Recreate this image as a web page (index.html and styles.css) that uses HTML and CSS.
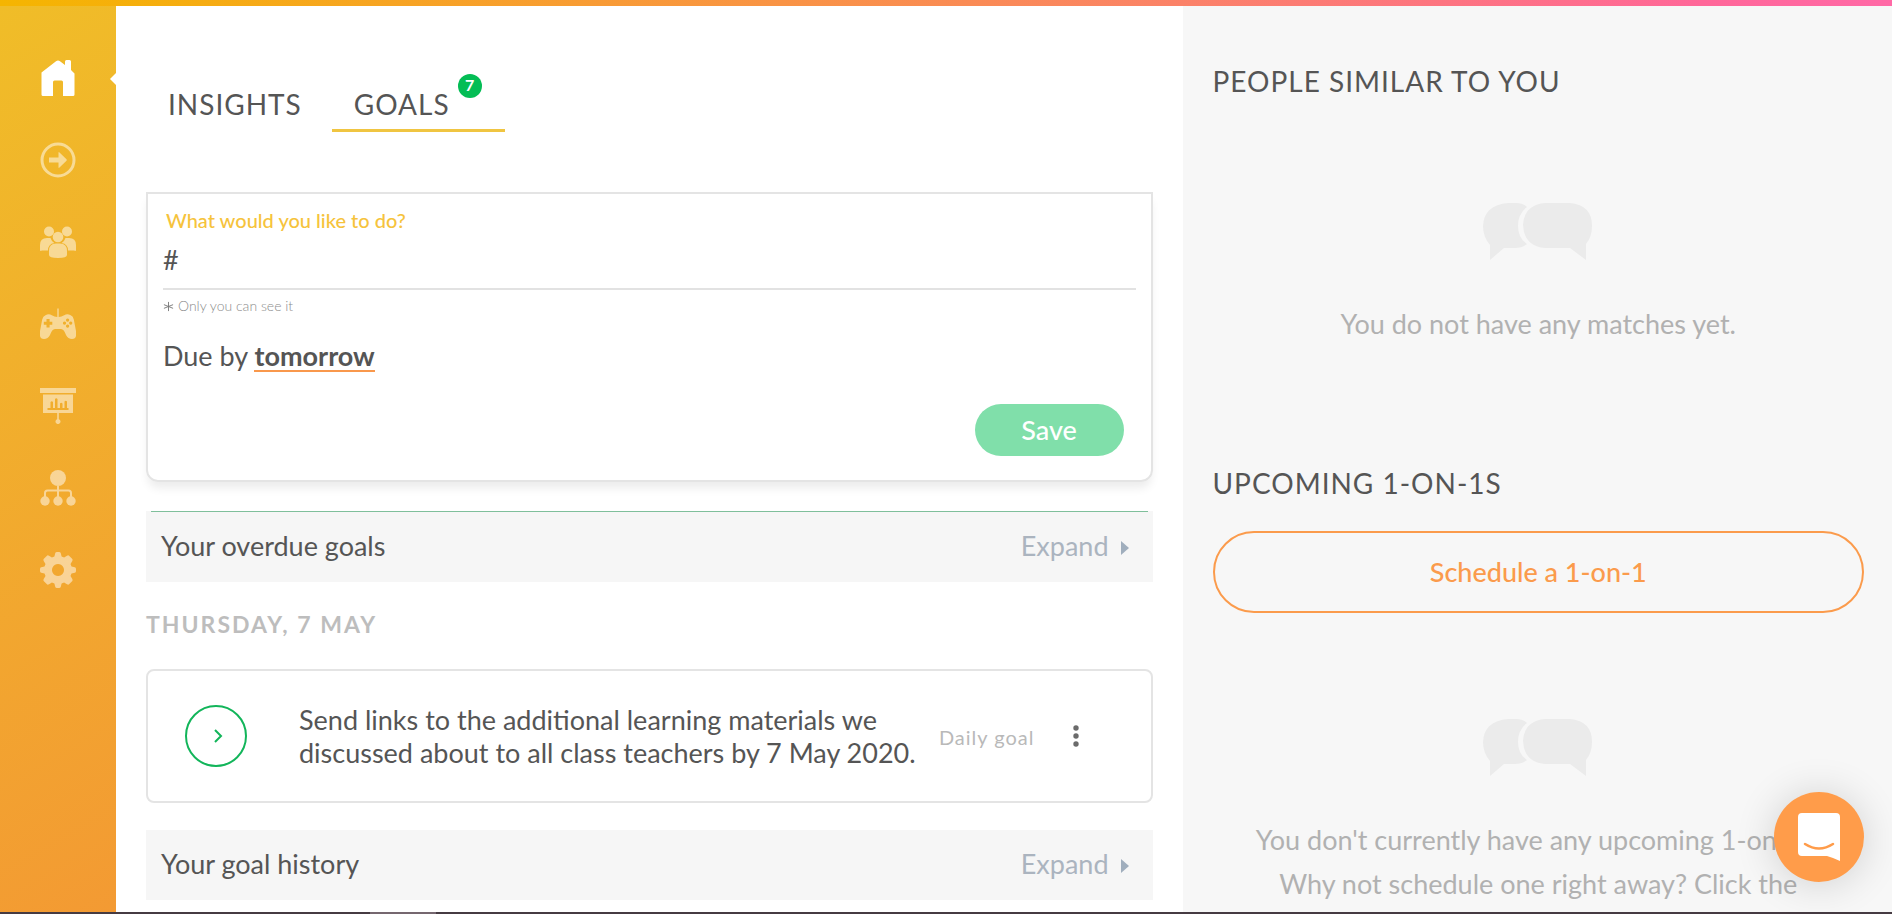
FILE: index.html
```html
<!DOCTYPE html>
<html lang="en">

<head>
    <meta charset="UTF-8">
    <meta name="viewport" content="width=device-width, initial-scale=1.0">
    <title>Goals</title>
    <link rel="stylesheet" href="styles.css">
</head>
<body>
<div class="topbar"></div>

<div class="layout">
    <nav class="sidebar" aria-label="Main">
        <a href="#home" class="active" aria-label="Home">
            <svg viewBox="0 0 36 36"><path d="M1.500 12.500L16 1.200q2-1.500 4 0L25 5V1.500Q25 0 26.500 0h3Q31 0 31 1.500V10l3.500 3.500V34.500Q34.500 36 33 36H23V22q0-1.500-1.500-1.500h-7Q13 20.500 13 22V36H3q-1.500 0-1.500-1.500z"/></svg>
        </a>
        <a href="#next" aria-label="Next steps">
            <svg viewBox="0 0 36 36"><circle cx="18" cy="18" r="16" fill="none" stroke="currentColor" stroke-width="3"/><path d="M9 15.500h9.500V11q0-1.500 1-.5l7 6.800q.7.700 0 1.400l-7 6.800q-1 1-1-.5v-4.500H9z"/></svg>
        </a>
        <a href="#people" aria-label="People">
            <svg viewBox="0 0 36 36"><circle cx="9" cy="7.500" r="5"/><circle cx="27" cy="7.500" r="5"/><circle cx="18" cy="13" r="5.300"/><path d="M0 26v-5q0-7 7-7h3.500q1 3.300 3.800 5Q8 20 8 26.500H2Q0 27.500 0 26zM36 26v-5q0-7-7-7h-3.500q-1 3.300-3.800 5Q28 20 28 26.500h6q2 1 2-.5zM9 31v-4q0-7.500 7-7.500h4q7 0 7 7.500v4q0 3-9 3t-9-3z"/></svg>
        </a>
        <a href="#games" aria-label="Games">
            <svg viewBox="0 0 36 36"><path fill-rule="evenodd" d="M17.300 2.500h1.400V11q2.800 0 5.500-1.700 3-2 6.500 0 2.500 1 3.100 4.200L36 25v5q-.5 3-4 3-4 0-6-4-2-6-5-6h-6q-3 0-5 6-2 4-6 4-3.500 0-4-3v-5l2.200-11.500Q3 10.300 5.500 9.300q3.200-2 6.300 0Q14.500 11 17.300 11zM6.500 13v2.700H3.800v3.100h2.700v2.700h3.100v-2.700h2.700v-3.100H9.600V13zM27.600 12.500a1.600 1.600 0 1 0 .01 0zM27.600 18.500a1.600 1.600 0 1 0 .01 0zM24.500 15.500a1.600 1.600 0 1 0 .01 0zM30.700 15.500a1.600 1.600 0 1 0 .01 0z"/></svg>
        </a>
        <a href="#reports" aria-label="Reports">
            <svg viewBox="0 0 36 36"><path fill-rule="evenodd" d="M0 0h36v5H0zM3 6.500h30V25H18.800v6.200a2.500 2.500 0 1 1-1.600 0V25H3zM7.500 20v2h21v-2H27v-6.500q-1.200-1.500-2.500 0V20h-2v-4.500q-1.300-1.500-2.500 0V20h-2.500v-9q-1.200-1.500-2.500 0v9h-2v-6q-1.200-1.500-2.500 0v6z"/></svg>
        </a>
        <a href="#teams" aria-label="Teams">
            <svg viewBox="0 0 36 36"><circle cx="18" cy="8" r="8"/><circle cx="5" cy="31" r="4.700"/><circle cx="18" cy="31" r="4.700"/><circle cx="31" cy="31" r="4.700"/><path fill="none" stroke="currentColor" stroke-width="2" d="M18 16v10.500M5 26.500V23q0-2.500 2.500-2.500H17M19 20.500h9.500Q31 20.500 31 23v3.500"/></svg>
        </a>
        <a href="#settings" aria-label="Settings">
            <svg viewBox="0 0 36 36"><path fill-rule="evenodd" d="M15.200 1.200Q15.500 0 17 0h2q1.500 0 1.800 1.200l.8 3.300 2.500 1 2.900-1.800q1.300-.8 2.300.2l2.800 2.800q1 1 .2 2.300l-1.800 2.900 1 2.500 3.300.8Q36 15.500 36 17v2q0 1.500-1.200 1.800l-3.300.8-1 2.500 1.800 2.900q.8 1.300-.2 2.300l-2.800 2.800q-1 1-2.300.2l-2.900-1.800-2.500 1-.8 3.300Q20.500 36 19 36h-2q-1.500 0-1.800-1.200l-.8-3.300-2.500-1L9 32.300q-1.300.8-2.300-.2l-2.800-2.800q-1-1-.2-2.300l1.800-2.900-1-2.500-3.300-.8Q0 20.500 0 19v-2q0-1.500 1.200-1.800l3.300-.8 1-2.500L3.700 9q-.8-1.300.2-2.300l2.800-2.800q1-1 2.300-.2l2.900 1.800 2.500-1zM18 12a6 6 0 1 0 .01 0z"/></svg>
        </a>
    </nav>

    <main class="main">
        <div class="tabs">
            <a href="#insights" class="tab">INSIGHTS</a>
            <a href="#goals" class="tab selected">GOALS<span class="badge">7</span></a>
        </div>

        <form class="goal-form">
            <label for="goal">What would you like to do?</label>
            <input type="text" id="goal" name="goal" value="#">
            <p class="hint">
                <svg viewBox="0 0 12 12"><path d="M6 1v10M1 4l10 4M11 4L1 8"/></svg>
                Only you can see it
            </p>
            <p class="due">Due by <a href="#due">tomorrow</a></p>
            <button type="submit" class="save">Save</button>
        </form>

        <section class="bar bar-overdue">
            <h2>Your overdue goals</h2>
            <button type="button" class="expand">Expand <span class="caret"></span></button>
        </section>

        <h3 class="date">THURSDAY, 7 MAY</h3>

        <article class="goal">
            <button type="button" class="check" aria-label="Mark as done">
                <svg viewBox="0 0 8 14"><path d="M1 1l6 6-6 6"/></svg>
            </button>
            <p class="goal-text">Send links to the additional learning materials we discussed about to all class teachers by 7 May 2020.</p>
            <span class="goal-type">Daily goal</span>
            <button type="button" class="more" aria-label="More">
                <svg viewBox="0 0 6 24"><circle cx="3" cy="4" r="2.700"/><circle cx="3" cy="12" r="2.700"/><circle cx="3" cy="20" r="2.700"/></svg>
            </button>
        </article>

        <section class="bar">
            <h2>Your goal history</h2>
            <button type="button" class="expand">Expand <span class="caret"></span></button>
        </section>
    </main>

    <aside class="side">
        <section class="matches">
            <h2>PEOPLE SIMILAR TO YOU</h2>
            <div class="empty">
                <svg viewBox="0 0 110 57"><path d="M25 0h8q7 0 11 4-9 7-9 19t9 18q-5 4-12 4H21L7 57V42Q0 34 0 23 1 2 25 0zM62 0h25q22 2 22 23 0 11-6 18v16L87 45H62Q41 43 40 22 41 2 62 0z"/></svg>
                <p>You do not have any matches yet.</p>
            </div>
        </section>

        <section>
            <h2>UPCOMING 1-ON-1S</h2>
            <button type="button" class="schedule">Schedule a 1-on-1</button>
            <div class="empty">
                <svg viewBox="0 0 110 57"><path d="M25 0h8q7 0 11 4-9 7-9 19t9 18q-5 4-12 4H21L7 57V42Q0 34 0 23 1 2 25 0zM62 0h25q22 2 22 23 0 11-6 18v16L87 45H62Q41 43 40 22 41 2 62 0z"/></svg>
                <p>You don't currently have any upcoming 1-on-1s.<br>Why not schedule one right away? Click the</p>
            </div>
        </section>
    </aside>
</div>

<div class="bottombar"></div>

<button type="button" class="chat" aria-label="Open chat">
    <svg viewBox="0 0 42 48"><path fill="#fff" d="M4 0h34q4 0 4 4v44q-6-3-13-5H4q-4 0-4-4V4q0-4 4-4z"/><path fill="none" stroke="#ff9c4a" stroke-width="2.500" stroke-linecap="round" d="M7 31q14 9 28 0"/></svg>
</button>
</body>
</html>
```
FILE: styles.css
```css
* {
    box-sizing: border-box;
}

body {
    margin: 0;
    height: 100vh;
    display: flex;
    flex-direction: column;
    overflow: hidden;
    font-family: Lato, sans-serif;
    font-size: 27px;
    line-height: 32px;
    color: #555;
    background: #fff;
}

h2, h3, p {
    margin: 0;
    font-size: inherit;
    font-weight: 400;
}

a {
    color: inherit;
    text-decoration: none;
}

button, input {
    font: inherit;
    border: none;
    background: none;
    padding: 0;
}

button {
    cursor: pointer;
}

svg {
    display: block;
    fill: currentColor;
}

.topbar {
    flex: none;
    height: 6px;
    background: linear-gradient(90deg, #f5b500, #fb8267 62%, #ff6799 90%, #ff69a6);
}

.bottombar {
    flex: none;
    height: 2px;
    background: linear-gradient(90deg, #463b42 370px, #75676f 370px, #75676f 436px, #463b42 436px);
}

.layout {
    flex: 1;
    min-height: 0;
    display: grid;
    grid-template-columns: 116px 1fr 37.5%;
    overflow: hidden;
}

/* Sidebar */
.sidebar {
    position: relative;
    display: flex;
    flex-direction: column;
    align-items: center;
    gap: 46px;
    padding-top: 54px;
    color: rgba(255, 255, 255, 0.5);
    background: linear-gradient(150deg, #f0bd28, #f39a33);
}

.sidebar::after {
    content: "";
    position: absolute;
    top: 67px;
    right: 0;
    border: 6px solid transparent;
    border-left: 0;
    border-right-color: #fff;
}

.sidebar svg {
    width: 36px;
    height: 36px;
}

.sidebar .active {
    color: #fff;
}

/* Main column */
.main {
    padding: 82px 30px 0;
}

.tabs {
    display: flex;
    gap: 8px;
    margin-bottom: 60px;
}

.tab {
    position: relative;
    padding: 0 22px 9px;
    border-bottom: 3px solid transparent;
    font-size: 28px;
    letter-spacing: 1px;
}

.selected {
    padding-right: 55px;
    border-color: #f0c541;
}

.badge {
    position: absolute;
    top: -14px;
    right: 23px;
    width: 24px;
    height: 24px;
    border-radius: 50%;
    background: #04bd55;
    color: #fff;
    font-size: 16px;
    font-weight: 700;
    line-height: 22px;
    letter-spacing: 0;
    text-align: center;
}

.goal-form {
    display: flex;
    flex-direction: column;
    padding: 14px 15px 24px;
    margin-bottom: 29px;
    border: 2px solid #e4e4e4;
    border-radius: 0 0 12px 12px;
    box-shadow: 0 8px 10px -2px rgba(0, 0, 0, 0.08);
}

.goal-form label {
    padding-left: 3px;
    font-size: 20px;
    font-weight: 500;
    line-height: 24px;
    color: #f6c33c;
}

.goal-form input {
    width: 100%;
    height: 58px;
    padding-bottom: 2px;
    border-bottom: 2px solid #e2e2e2;
    color: #555;
    outline: none;
}

.hint {
    display: flex;
    align-items: center;
    gap: 4px;
    margin-top: 6px;
    font-size: 14px;
    font-weight: 300;
    line-height: 20px;
    color: #8c8c8c;
}

.hint svg {
    width: 11px;
    height: 11px;
    fill: none;
    stroke: #777;
}

.due {
    margin-top: 24px;
}

.due a {
    display: inline-block;
    border-bottom: 2px solid #f9984c;
    font-weight: 700;
    line-height: 28px;
}

.save {
    align-self: flex-end;
    width: 149px;
    height: 52px;
    margin: 32px 12px 0;
    border-radius: 26px;
    background: #80dfaa;
    color: #fff;
    font-weight: 500;
}

.bar {
    display: flex;
    justify-content: space-between;
    padding: 18px 24px 20px 15px;
    background: #f6f6f6;
}

.bar-overdue {
    flex-wrap: wrap;
}

/* thin green rule along the top edge */
.bar-overdue::before {
    content: "";
    flex: 0 0 calc(100% + 29px);
    height: 1px;
    margin: -18px -19px 18px -10px;
    background: #7fbf9b;
}

.expand {
    display: flex;
    align-items: center;
    gap: 12px;
    color: #abb4bf;
}

.caret {
    margin-top: 4px;
    border: 7px solid transparent;
    border-left: 8px solid #a0aebd;
    border-right: 0;
}

.date {
    margin: 27px 0 30px;
    font-size: 23px;
    font-weight: 700;
    line-height: 30px;
    letter-spacing: 2px;
    color: #bdbdbd;
}

.goal {
    display: flex;
    align-items: center;
    padding: 32px 72px 32px 37px;
    margin-bottom: 27px;
    border: 2px solid #e4e4e4;
    border-radius: 8px;
}

.check {
    flex: none;
    display: grid;
    place-items: center;
    width: 62px;
    height: 62px;
    margin-right: 52px;
    border: 2px solid #12b55a;
    border-radius: 50%;
}

.check svg {
    width: 8px;
    height: 14px;
    margin-left: 4px;
    fill: none;
    stroke: #12b55a;
    stroke-width: 2;
    overflow: visible;
}

.goal-text {
    flex: 1;
    line-height: 33px;
}

.goal-type {
    margin: 2px 38px 0 20px;
    font-size: 20px;
    letter-spacing: 1px;
    white-space: nowrap;
    color: #b9b9b9;
}

.more svg {
    width: 6px;
    height: 24px;
    color: #6b6b6b;
}

/* Right column */
.side {
    padding: 59px 28px 0 30px;
    background: #f7f7f7;
}

.side h2 {
    font-size: 28px;
    letter-spacing: 1px;
}

.empty {
    padding: 106px 20px 0;
    text-align: center;
    line-height: 44px;
    color: #b1b1b1;
}

.empty svg {
    width: 110px;
    height: 57px;
    margin: 0 auto 42px;
    color: #ebebeb;
}

.matches {
    margin-bottom: 121px;
}

.schedule {
    display: block;
    width: 100%;
    height: 82px;
    margin-top: 32px;
    border: 2px solid #fb9b4c;
    border-radius: 42px;
    color: #fb9b4c;
    font-weight: 500;
}

/* Chat launcher, floats over the page */
.chat {
    position: fixed;
    right: 28px;
    bottom: 32px;
    display: grid;
    place-items: center;
    width: 90px;
    height: 90px;
    border-radius: 50%;
    background: #ff9c4a;
    box-shadow: 0 2px 40px rgba(0, 0, 0, 0.16);
}

.chat svg {
    width: 42px;
    height: 48px;
}
```
